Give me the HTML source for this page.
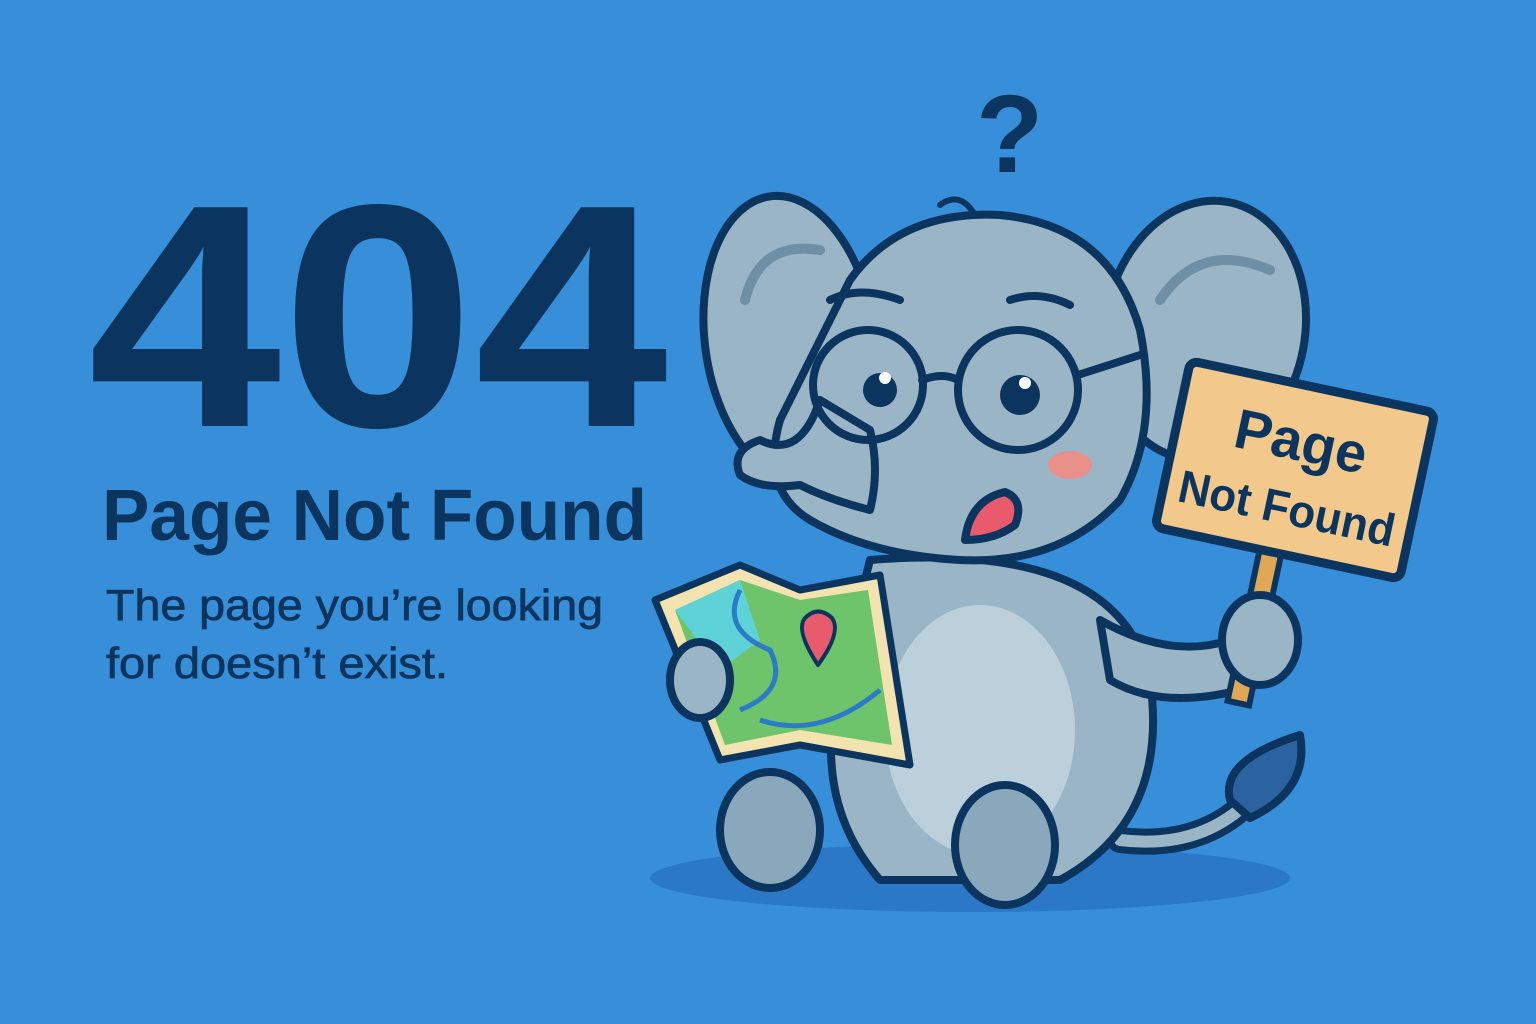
<!DOCTYPE html>
<html><head><meta charset="utf-8"><style>
html,body{margin:0;padding:0;background:#378FD9;width:1536px;height:1024px;overflow:hidden}
svg{display:block}
</style></head><body>
<svg width="1536" height="1024" viewBox="0 0 1536 1024" xmlns="http://www.w3.org/2000/svg">
<rect width="1536" height="1024" fill="#378FD9"/>
<g font-family="Liberation Sans, sans-serif" fill="#0B355E" font-weight="bold">
<text x="88" y="426" font-size="318" textLength="580" lengthAdjust="spacingAndGlyphs">404</text>
<text x="102" y="540" font-size="72" textLength="545" lengthAdjust="spacingAndGlyphs">Page Not Found</text>
</g>
<g font-family="Liberation Sans, sans-serif" fill="#0B355E" stroke="#0B355E" stroke-width="0.8">
<text x="106" y="620" font-size="44" textLength="497" lengthAdjust="spacingAndGlyphs">The page you’re looking</text>
<text x="106" y="678" font-size="44" textLength="342" lengthAdjust="spacingAndGlyphs">for doesn’t exist.</text>
</g>
<text x="976" y="172" font-family="Liberation Sans, sans-serif" font-weight="bold" font-size="110" fill="#0B355E">?</text>
<ellipse cx="970" cy="878" rx="320" ry="34" fill="#2A78C6"/>
<g stroke="#0B355E" stroke-width="8" stroke-linejoin="round" stroke-linecap="round">
<path d="M1120 840 Q1200 850 1250 800" fill="none" stroke-width="26"/>
<path d="M1120 840 Q1200 850 1250 800" fill="none" stroke="#9AB5C6" stroke-width="12"/>
<path d="M1230 800 Q1220 760 1300 735 Q1310 790 1250 818 Z" fill="#2B63A0"/>
<path d="M870 560 Q1120 540 1150 680 Q1170 820 1060 880 L880 880 Q810 800 840 680 Z" fill="#9AB5C6"/>
<ellipse cx="980" cy="730" rx="95" ry="125" fill="#BCD0DB" stroke="none"/>
<path d="M1100 620 Q1170 660 1230 640 L1240 690 Q1160 710 1110 680 Z" fill="#9AB5C6"/>
<!-- ears -->
<ellipse cx="790" cy="340" rx="85" ry="145" fill="#9AB5C6" transform="rotate(-8 790 340)"/>
<path d="M745 300 Q760 240 820 250" fill="none" stroke="#6F8FA5" stroke-width="10"/>
<ellipse cx="1205" cy="330" rx="100" ry="130" fill="#9AB5C6" transform="rotate(10 1205 330)"/>
<path d="M1160 300 Q1200 240 1270 270" fill="none" stroke="#6F8FA5" stroke-width="10"/>
<path d="M850 280 Q900 210 1000 215 Q1110 225 1140 330 Q1160 430 1120 500 Q1060 565 960 560 Q870 555 810 520 Q760 490 780 420 Q810 360 850 280 Z" fill="#9AB5C6"/>
<path d="M820 400 Q800 460 760 440 Q730 450 740 475 Q760 490 800 485 Q830 500 870 510 Q880 470 870 430 Z" fill="#9AB5C6"/>
<path d="M940 205 Q960 190 975 215" fill="none" stroke-width="6"/>
<circle cx="868" cy="385" r="55" fill="none"/>
<circle cx="1018" cy="390" r="60" fill="none"/>
<path d="M922 380 Q943 372 958 380 M1078 375 L1140 355" fill="none"/>
<path d="M830 300 Q860 285 900 300 M1010 300 Q1040 290 1070 305" fill="none"/>
<path d="M965 540 Q970 500 1005 492 Q1025 500 1015 525 Q995 540 965 540 Z" fill="#E85B6C"/>
<ellipse cx="770" cy="830" rx="50" ry="58" fill="#8AA8BC"/>
<ellipse cx="1005" cy="845" rx="50" ry="60" fill="#8AA8BC"/>
</g>
<circle cx="880" cy="390" r="17" fill="#0B355E"/><circle cx="885" cy="378" r="6" fill="#fff"/>
<circle cx="1020" cy="395" r="20" fill="#0B355E"/><circle cx="1025" cy="383" r="6" fill="#fff"/>
<ellipse cx="1070" cy="465" rx="22" ry="14" fill="#E9908A"/>
<rect x="1245" y="545" width="22" height="160" fill="#E0A854" stroke="#0B355E" stroke-width="6" transform="rotate(12 1256 620)"/>
<g transform="rotate(12 1295 470)">
<rect x="1170" y="385" width="250" height="170" rx="8" fill="#F2C98A" stroke="#0B355E" stroke-width="9"/>
<text x="1295" y="460" text-anchor="middle" font-family="Liberation Sans, sans-serif" font-weight="bold" font-size="56" fill="#0B355E">Page</text>
<text x="1295" y="525" text-anchor="middle" font-family="Liberation Sans, sans-serif" font-weight="bold" font-size="46" fill="#0B355E" textLength="220" lengthAdjust="spacingAndGlyphs">Not Found</text>
</g>
<ellipse cx="1260" cy="640" rx="38" ry="45" fill="#9AB5C6" stroke="#0B355E" stroke-width="8"/>
<g stroke="#0B355E" stroke-width="7" stroke-linejoin="round">
<path d="M655 600 L740 565 L800 590 L880 575 L910 765 L800 745 L720 760 Z" fill="#F3E3B0"/>
<path d="M675 610 L740 580 L800 600 L868 590 L892 745 L800 730 L725 745 Z" fill="#6DC46A" stroke="none"/>
<path d="M675 610 L740 580 L760 640 L720 670 Z" fill="#5DD3D8" stroke="none"/>
<path d="M740 590 Q720 630 770 650 Q790 690 740 710 M760 720 Q820 740 880 690" fill="none" stroke="#2B7BC8" stroke-width="5"/>
<path d="M818 665 Q795 630 805 618 Q818 605 832 618 Q842 632 818 665 Z" fill="#E85B6C" stroke-width="4"/>
</g>
<ellipse cx="700" cy="680" rx="30" ry="38" fill="#9AB5C6" stroke="#0B355E" stroke-width="8"/>
</svg>
</body></html>
